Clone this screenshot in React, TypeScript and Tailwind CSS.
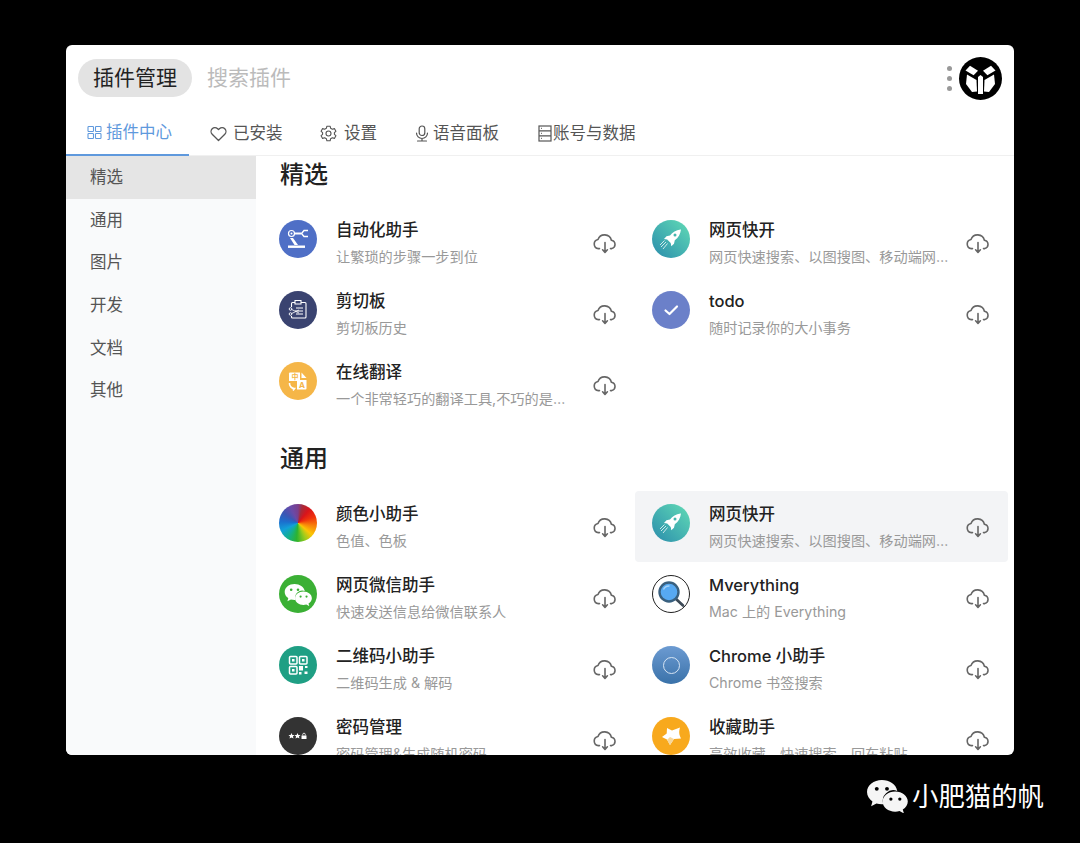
import React from "react";

const FONT = "[font-family:Inter,'Noto_Sans_CJK_SC',sans-serif]";

function Cloud() {
  return (
    <svg width="24" height="20" viewBox="0 0 24 20" fill="none" stroke="#666" strokeWidth="1.6" strokeLinecap="round" strokeLinejoin="round">
      <path d="M6.5 14.6H5.4A4.6 4.6 0 0 1 5 5.5 7 7 0 0 1 18.4 6.2 4.3 4.3 0 0 1 18.8 14.6H17.5" />
      <path d="M12 8.5V18M9.6 15.8 12 18.4l2.4-2.6" />
    </svg>
  );
}

function Circle({ className, children }: { className: string; children?: React.ReactNode }) {
  return (
    <div className={`w-[38px] h-[38px] shrink-0 rounded-full overflow-hidden flex items-center justify-center ${className}`}>
      {children}
    </div>
  );
}

const S = ({ children }: { children: React.ReactNode }) => (
  <svg width="38" height="38" viewBox="0 0 38 38" fill="none">{children}</svg>
);

const Robot = () => (
  <Circle className="bg-[#4f6fc6]">
    <S>
      <circle cx="12.5" cy="13.5" r="3" stroke="#fff" strokeWidth="1.2" />
      <circle cx="12.5" cy="13.5" r="1" fill="#fff" />
      <path d="M16 13.5 22 13.5" stroke="#fff" strokeWidth="1.8" />
      <path d="M29 10.5 25 10.5 22.5 13.5 25 16.5 29 16.5" stroke="#fff" strokeWidth="1.4" />
      <path d="M11 18 L14 18 L19 25 L15.5 25 Z" fill="#fff" />
      <rect x="9" y="25.5" width="17" height="2.4" fill="#fff" />
    </S>
  </Circle>
);
const Clip = () => (
  <Circle className="bg-[#3a4370]">
    <S>
      <path d="M16 11.5H13.5a1 1 0 0 0-1 1V16M22 11.5h4a1 1 0 0 1 1 1V26a1 1 0 0 1-1 1H13.5a1 1 0 0 1-1-1v-1" stroke="#fff" strokeWidth="1.1" />
      <path d="M16 9.5h6V13h-6z" stroke="#fff" strokeWidth="1.1" />
      <path d="M17 17h7M16 20h8M17 23h7" stroke="#fff" strokeWidth="1" />
      <circle cx="11.5" cy="18" r="1.3" stroke="#fff" strokeWidth=".9" />
      <circle cx="11.5" cy="23" r="1.3" stroke="#fff" strokeWidth=".9" />
      <path d="M12.7 18.5 20 22M12.7 22.5 20 19" stroke="#fff" strokeWidth=".8" />
    </S>
  </Circle>
);
const Translate = () => (
  <Circle className="bg-[#f5b648]">
    <S>
      <path d="M10 11.5a1 1 0 0 1 1-1h10v8.500H10z" fill="#fff" />
      <path d="M18 18h9.500v8.500a1 1 0 0 1-1 1H18z" fill="#fff" />
      <path d="M22.500 10.500 27.500 16h-5z" fill="#fff" />
      <path d="M10.500 21a5 5 0 0 0 5 5.500l-1.500 2" stroke="#fff" strokeWidth="1.600" />
      <text x="12.500" y="17" fontSize="7" fontWeight="700" fill="#f5b648" fontFamily="'Noto Sans CJK SC',sans-serif">中</text>
      <text x="20" y="26" fontSize="8" fontWeight="700" fill="#f5b648" fontFamily="Inter,sans-serif">A</text>
    </S>
  </Circle>
);
const Rocket = () => (
  <Circle className="bg-gradient-to-tr from-[#2b8cab] to-[#62dcb4]">
    <S>
      <path d="M28.500 9.500c-4.500.5-8 2.500-10.500 6l-3.500.8L12 19l3.200.6 3.500 3.500.6 3.200 2.700-2.500.8-3.500c3.500-2.500 5.600-6.300 6.200-10.800z" fill="#fff" />
      <circle cx="23" cy="15" r="1.500" fill="#46b5ad" />
      <path d="M14 22 9 27M15.500 23.500 11 29M12.500 20.500 8 25" stroke="#fff" strokeWidth="1" opacity=".75" />
    </S>
  </Circle>
);
const Todo = () => (
  <Circle className="bg-[#6b80c9]">
    <S>
      <path d="M13.500 19.500 17.500 23 25 15.500" stroke="#fff" strokeWidth="2.200" strokeLinecap="round" strokeLinejoin="round" />
    </S>
  </Circle>
);
const Wheel = () => (
  <Circle className="bg-[conic-gradient(#7a3f8c_0deg,#a62b3a_15deg,#d9141b_40deg,#f0340c_70deg,#f8820a_100deg,#fcc605_130deg,#9ccb1c_155deg,#2cb32f_185deg,#13b08e_215deg,#12a0d8_245deg,#1b6fce_275deg,#3b56b4_305deg,#6a4aa8_335deg,#7a3f8c_360deg)]" />
);

function Chat({ fill, eye, w, h }: { fill: string; eye: string; w: number; h: number }) {
  return (
    <svg width={w} height={h} viewBox="0 0 41 33">
      <path d="M15.500 1C7.500 1 1 6.200 1 12.700c0 3.700 2.100 6.900 5.300 9.100L5 26.500l5.200-2.700c1.700.5 3.500.7 5.300.7h1.300a10.500 10.500 0 0 1 13.700-13C29.300 5.200 23 1 15.500 1z" fill={fill} />
      <circle cx="10.500" cy="9.500" r="1.900" fill={eye} />
      <circle cx="20.500" cy="9.500" r="1.900" fill={eye} />
      <path d="M28.500 12c-6.900 0-12.300 4.400-12.300 9.900s5.400 9.900 12.300 9.900c1.500 0 2.900-.2 4.200-.6l4.300 2.300-1.100-3.800c3-1.800 4.900-4.600 4.900-7.800C40.800 16.400 35.400 12 28.500 12z" fill={fill} />
      <circle cx="24.300" cy="19.500" r="1.600" fill={eye} />
      <circle cx="33" cy="19.500" r="1.600" fill={eye} />
    </svg>
  );
}
const Wechat = () => (
  <Circle className="bg-[#3bb035]"><Chat fill="#fff" eye="#3bb035" w={28} h={23} /></Circle>
);
const Qr = () => (
  <Circle className="bg-[#1f9f84]">
    <S>
      <rect x="10.500" y="10.500" width="7.500" height="7.500" rx="1" stroke="#fff" strokeWidth="1.500" />
      <rect x="20.500" y="10.500" width="7.500" height="7.500" rx="1" stroke="#fff" strokeWidth="1.500" />
      <rect x="10.500" y="20.500" width="7.500" height="7.500" rx="1" stroke="#fff" strokeWidth="1.500" />
      <rect x="13" y="13" width="2.500" height="2.500" fill="#fff" />
      <rect x="23" y="13" width="2.500" height="2.500" fill="#fff" />
      <rect x="13" y="23" width="2.500" height="2.500" fill="#fff" />
      <path d="M20 20h4v4.500h-4zM26 20h2.500v2H26zM25.500 25.500h3V28h-3zM20 26h2.500v2.500H20z" fill="#fff" />
    </S>
  </Circle>
);
const Star = ({ x }: { x: number }) => (
  <path
    transform={`translate(${x} 19)`}
    d="M0-3 .9-1 3-.9 1.400.5 2 2.600 0 1.500-2 2.600-1.400.5-3-.9-.9-1z"
    fill="#fff"
  />
);
const Pass = () => (
  <Circle className="bg-[#333333]">
    <S>
      <Star x={12.500} />
      <Star x={18.500} />
      <rect x="22.500" y="18.500" width="5" height="3.500" fill="#fff" />
      <path d="M23.700 18.500v-1a1.300 1.300 0 0 1 2.600 0v1" stroke="#fff" strokeWidth=".8" />
    </S>
  </Circle>
);
const Search = () => (
  <Circle className="bg-white border border-[#222]">
    <svg width="36" height="36" viewBox="0 0 36 36" fill="none">
      <path d="M22.500 22.500 30 29.500" stroke="#3d4a57" strokeWidth="2.800" strokeLinecap="round" />
      <circle cx="16" cy="16" r="9.500" fill="#57a9f2" stroke="#39607f" strokeWidth="2.400" />
      <path d="M10.500 13.500a6 6 0 0 1 6-3.500" stroke="#a5d4fa" strokeWidth="1.400" />
    </svg>
  </Circle>
);
const ChromeI = () => (
  <Circle className="bg-gradient-to-b from-[#6c9bd2] to-[#3a72a9]">
    <div className="w-[17px] h-[17px] rounded-full border border-[#d6e4f3]" />
  </Circle>
);
const Fav = () => (
  <Circle className="bg-[#f8a91d]">
    <S>
      <path d="M28 10.500c-.8 2.800-1 5-.5 7.200.4 1.500 1 2.700 1.500 3.800l-7 .5-4 6-3-5.500-5-2.500 4.700-3.500.3-5.500 5 2.500z" fill="#fff" />
      <path d="M15 23l3-3 4 2-4 6z" fill="#f6d79c" />
    </S>
  </Circle>
);

type Item = { icon: React.ReactNode; title: string; desc: string; hover?: boolean };

const featured: Item[] = [
  { icon: <Robot />, title: "自动化助手", desc: "让繁琐的步骤一步到位" },
  { icon: <Rocket />, title: "网页快开", desc: "网页快速搜索、以图搜图、移动端网页调试" },
  { icon: <Clip />, title: "剪切板", desc: "剪切板历史" },
  { icon: <Todo />, title: "todo", desc: "随时记录你的大小事务" },
  { icon: <Translate />, title: "在线翻译", desc: "一个非常轻巧的翻译工具,不巧的是功能很强大" },
];
const common: Item[] = [
  { icon: <Wheel />, title: "颜色小助手", desc: "色值、色板" },
  { icon: <Rocket />, title: "网页快开", desc: "网页快速搜索、以图搜图、移动端网页调试", hover: true },
  { icon: <Wechat />, title: "网页微信助手", desc: "快速发送信息给微信联系人" },
  { icon: <Search />, title: "Mverything", desc: "Mac 上的 Everything" },
  { icon: <Qr />, title: "二维码小助手", desc: "二维码生成 & 解码" },
  { icon: <ChromeI />, title: "Chrome 小助手", desc: "Chrome 书签搜索" },
  { icon: <Pass />, title: "密码管理", desc: "密码管理&生成随机密码" },
  { icon: <Fav />, title: "收藏助手", desc: "高效收藏、快速搜索、回车粘贴" },
];

function Row({ item }: { item: Item }) {
  return (
    <div className={`h-[71px] flex items-start pl-[17px] rounded-[4px] ${item.hover ? "bg-[#f3f4f6]" : ""}`}>
      <div className="mt-[13px]">{item.icon}</div>
      <div className="ml-[19px] w-[241px] pt-[12px]">
        <div className="text-[16.500px] leading-[22px] font-medium text-[#222]">{item.title}</div>
        <div className="mt-[6px] text-[14.200px] leading-[20px] text-[#999] truncate">{item.desc}</div>
      </div>
      <div className="ml-[16px] mt-[27px]"><Cloud /></div>
    </div>
  );
}

function Section({ title, items, className }: { title: string; items: Item[]; className: string }) {
  return (
    <section className={className}>
      <h2 className="pl-[18px] mb-[16px] text-[24px] leading-[32px] font-medium text-[#222]">{title}</h2>
      <div className="grid grid-cols-[373px_373px]">
        {items.map((it, i) => <Row key={i} item={it} />)}
      </div>
    </section>
  );
}

const GridI = () => (
  <svg width="15" height="15" viewBox="0 0 15 15" fill="none" stroke="#5f99dd" strokeWidth="1.100">
    <rect x="1" y="1.500" width="5.500" height="5" rx=".8" />
    <rect x="8.500" y="1.500" width="5.500" height="5" rx=".8" />
    <rect x="1" y="8.500" width="5.500" height="5" rx=".8" />
    <rect x="8.500" y="8.500" width="5.500" height="5" rx=".8" />
  </svg>
);
const HeartI = () => (
  <svg width="17" height="16" viewBox="0 0 17 16" fill="none" stroke="#555" strokeWidth="1.300" strokeLinejoin="round">
    <path d="M8.500 14.500 2.200 8.200a3.900 3.900 0 0 1 0-5.500 3.800 3.800 0 0 1 5.400 0l.9.900.9-.9a3.800 3.800 0 0 1 5.400 0 3.900 3.900 0 0 1 0 5.500z" />
  </svg>
);
const GearI = () => (
  <svg width="17" height="17" viewBox="0 0 17 17" fill="none" stroke="#555" strokeWidth="1.100" strokeLinejoin="round">
    <path d="M6.900 1.200h3.200l.5 2 1.800 1 2-.6 1.500 2.700-1.500 1.400v1.600l1.500 1.400-1.500 2.700-2-.6-1.800 1-.5 2H6.900l-.5-2-1.800-1-2 .6L1.100 10.700l1.500-1.400V7.700L1.100 6.300l1.500-2.700 2 .6 1.800-1z" />
    <circle cx="8.500" cy="8.500" r="2.500" />
  </svg>
);
const MicI = () => (
  <svg width="14" height="17" viewBox="0 0 14 17" fill="none" stroke="#555" strokeWidth="1.200" strokeLinecap="round">
    <rect x="4.200" y="1" width="5.600" height="9.500" rx="2.800" />
    <path d="M1.500 8a5.500 5.500 0 0 0 11 0M7 13.500V16M2.500 16h9" />
  </svg>
);
const TableI = () => (
  <svg width="14" height="17" viewBox="0 0 14 17" fill="none" stroke="#555" strokeWidth="1.200">
    <rect x="1" y="1" width="12" height="15" />
    <path d="M1 5.800h12M1 10.800h12" />
    <path d="M3 3.400h.8M3 8.300h.8M3 13.300h.8" />
  </svg>
);

const tabs = [
  { label: "插件中心", icon: <GridI />, w: "w-[123px]", gap: "gap-[4px]", active: true },
  { label: "已安装", icon: <HeartI />, w: "w-[110px]", gap: "gap-[6px]" },
  { label: "设置", icon: <GearI />, w: "w-[95px]", gap: "gap-[7px]" },
  { label: "语音面板", icon: <MicI />, w: "w-[123px]", gap: "gap-[4px]" },
  { label: "账号与数据", icon: <TableI />, w: "w-[130px]", gap: "gap-[1px]" },
];

const side = ["精选", "通用", "图片", "开发", "文档", "其他"];

function Logo() {
  return (
    <svg width="43" height="43" viewBox="0 0 43 43" className="ml-[7px]">
      <circle cx="21.500" cy="21.500" r="21.500" fill="#000" />
      <g fill="#fff">
        <g id="arm">
          <path d="M6.500 13.500 11 8.800 19 13.700 14.600 18.200z" />
          <path d="M24 13.700 32 8.800 36.500 13.500 28.400 18.200z" />
        </g>
        <path d="M8 17.500 17.500 23 18 34.500 13 35 7 27z" />
        <path d="M35 17.500 25.500 23 25 34.500 30 35 36 27z" />
        <path d="M19 20 21.500 18 24 20 24 37 19 37z" />
      </g>
      <path d="M8 23 17 28.500M35 23 26 28.500" stroke="#000" strokeWidth="0" />
    </svg>
  );
}

export default function App() {
  return (
    <div className={`w-[1080px] h-[843px] bg-black pt-[45px] overflow-hidden flex flex-col ${FONT}`}>
      <div className="ml-[66px] w-[948px] h-[710px] shrink-0 bg-white rounded-[6px] overflow-hidden flex flex-col">
        <header className="h-[66px] shrink-0 flex items-center pl-[12px] pr-[12px]">
          <div className="h-[38px] w-[114px] rounded-full bg-[#e3e3e3] flex items-center justify-center text-[21px] text-[#222]">插件管理</div>
          <div className="ml-[15px] text-[21px] text-[#bbb] flex-1">搜索插件</div>
          <div className="flex flex-col gap-[5px]">
            <span className="w-[5px] h-[5px] rounded-full bg-[#999]" />
            <span className="w-[5px] h-[5px] rounded-full bg-[#999]" />
            <span className="w-[5px] h-[5px] rounded-full bg-[#999]" />
          </div>
          <Logo />
        </header>
        <nav className="h-[45px] shrink-0 flex border-b border-[#f0f0f0]">
          {tabs.map((t) => (
            <div
              key={t.label}
              className={`${t.w} ${t.gap} pl-[21px] flex items-center text-[16.500px] -mb-px ${t.active ? "text-[#5f99dd] border-b-2 border-[#5f99dd]" : "text-[#555]"}`}
            >
              {t.icon}
              <span>{t.label}</span>
            </div>
          ))}
        </nav>
        <div className="flex-1 min-h-0 flex">
          <aside className="w-[190px] shrink-0 bg-[#f9fafb]">
            {side.map((s, i) => (
              <div key={s} className={`h-[42.700px] flex items-center pl-[24px] text-[16.500px] text-[#555] ${i === 0 ? "bg-[#e5e5e5]" : ""}`}>
                {s}
              </div>
            ))}
          </aside>
          <main className="flex-1 min-w-0 overflow-hidden pl-[6px] pt-[3px]">
            <Section title="精选" items={featured} className="" />
            <Section title="通用" items={common} className="mt-[23px]" />
          </main>
        </div>
      </div>
      <div className="mt-[23px] pr-[36px] flex items-center justify-end gap-[4px] text-white text-[26.400px] leading-[36px]">
        <Chat fill="#f5f5f5" eye="#000" w={42} h={34} />
        <span>小肥猫的帆</span>
      </div>
    </div>
  );
}
